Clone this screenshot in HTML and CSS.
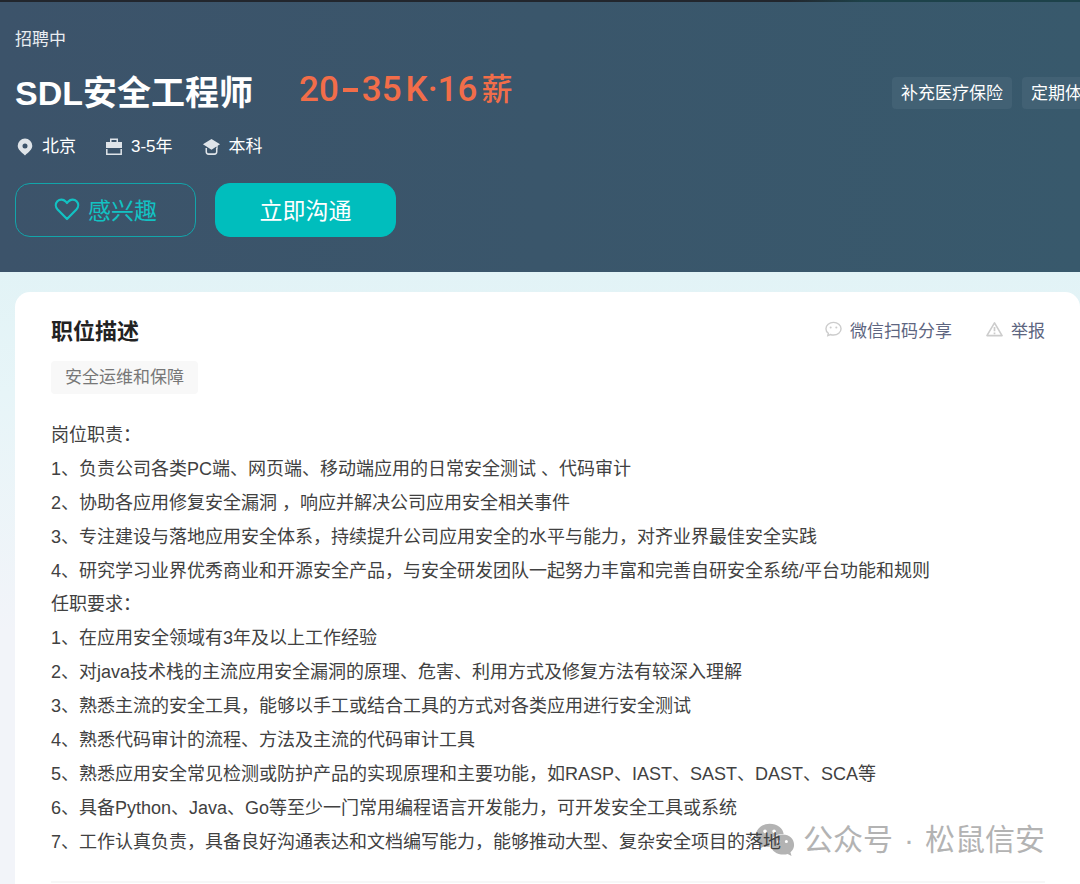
FILE: index.html
```html
<!DOCTYPE html>
<html lang="zh-CN">
<head>
  <meta charset="UTF-8" />
  <meta name="viewport" content="width=device-width, initial-scale=1.0"/>
  <title>SDL安全工程师</title>
  <link rel="stylesheet" href="styles.css">
</head>
<body>
  <header class="banner">
    <div class="job">
      <div class="status">招聘中</div>
      <div class="title-row">
        <h1>SDL安全工程师</h1>
        <div class="salary"><span>20</span><span class="dash"></span><span>35</span><span>K·16</span><span class="unit">薪</span></div>
      </div>
      <div class="meta">
        <span class="meta-item">
          <svg width="19" height="18" viewBox="0 0 19 18"><path fill="#dfe4e9" fill-rule="evenodd" d="M10 .5a7.300 7.300 0 0 1 7.300 7.300c0 3.600-3.300 6-7.300 9.700-4-3.700-7.300-6.100-7.300-9.700A7.300 7.300 0 0 1 10 .5zm0 5a2.500 2.500 0 1 0 0 5 2.500 2.500 0 0 0 0-5z"/></svg>
          北京
        </span>
        <span class="meta-item">
          <svg width="18" height="18" viewBox="0 0 18 18"><path fill="#dfe4e9" fill-rule="evenodd" d="M5 4V.5h8V4h4v6H1V4zm1.500 0h5V2h-5z"/><path fill="none" stroke="#dfe4e9" stroke-width="1.500" d="M1.800 11v5.200h14.400V11"/></svg>
          3-5年
        </span>
        <span class="meta-item">
          <svg width="19" height="18" viewBox="0 0 20 18"><path fill="#dfe4e9" d="M10 .5l9 5.500-2.500 1.800v2.700h-1.300V8.600L10 12 1 6z"/><path fill="none" stroke="#dfe4e9" stroke-width="1.600" d="M4.500 10v4q0 2.500 2.500 2.500h6q2.500 0 2.500-2.500v-4"/></svg>
          本科
        </span>
      </div>
      <div class="actions">
        <button type="button" class="btn btn-like">
          <svg width="26" height="24" viewBox="0 0 26 24"><path fill="none" stroke="#12c2c3" stroke-width="2.200" stroke-linejoin="round" d="M13 22L3.600 12.500C1.300 10 1.200 6.500 3.400 4.200c2.300-2.300 6-2.200 8.200.2L13 6l1.400-1.600c2.200-2.400 5.900-2.500 8.200-.2 2.200 2.300 2.100 5.800-.2 8.300z"/></svg>
          <span>感兴趣</span>
        </button>
        <button type="button" class="btn btn-chat"><span>立即沟通</span></button>
      </div>
    </div>
    <div class="perks">
      <span class="perk">补充医疗保险</span>
      <span class="perk">定期体检</span>
    </div>
  </header>

  <main class="content">
    <section class="card">
      <div class="card-head">
        <h2>职位描述</h2>
        <div class="links">
          <a href="#">
            <svg width="17" height="16" viewBox="0 0 18 16"><path fill="none" stroke="#ccc" stroke-width="1.500" d="M3 15l.5-2.500C1.800 11.300 1 9.600 1 7.700 1 4 4.600 1 9 1s8 3 8 6.700-3.600 6.700-8 6.700c-1.200 0-2.300-.2-3.300-.6z"/><circle cx="6" cy="6.500" r="1.100" fill="#ccc"/><circle cx="12" cy="6.500" r="1.100" fill="#ccc"/></svg>
            微信扫码分享
          </a>
          <a href="#">
            <svg width="17" height="16" viewBox="0 0 18 16"><path fill="none" stroke="#ccc" stroke-width="1.700" stroke-linejoin="round" d="M9 1.500L17 15H1z"/><path stroke="#ccc" stroke-width="1.800" d="M9 6v4.500M9 11.700v1.800"/></svg>
            举报
          </a>
        </div>
      </div>
      <span class="tag">安全运维和保障</span>

      <div class="desc">
        <h3>岗位职责：</h3>
        <p>1、负责公司各类PC端、网页端、移动端应用的日常安全测试 、代码审计</p>
        <p>2、协助各应用修复安全漏洞 ，响应并解决公司应用安全相关事件</p>
        <p>3、专注建设与落地应用安全体系，持续提升公司应用安全的水平与能力，对齐业界最佳安全实践</p>
        <p>4、研究学习业界优秀商业和开源安全产品，与安全研发团队一起努力丰富和完善自研安全系统/平台功能和规则</p>
        <h3>任职要求：</h3>
        <p>1、在应用安全领域有3年及以上工作经验</p>
        <p>2、对java技术栈的主流应用安全漏洞的原理、危害、利用方式及修复方法有较深入理解</p>
        <p>3、熟悉主流的安全工具，能够以手工或结合工具的方式对各类应用进行安全测试</p>
        <p>4、熟悉代码审计的流程、方法及主流的代码审计工具</p>
        <p>5、熟悉应用安全常见检测或防护产品的实现原理和主要功能，如RASP、IAST、SAST、DAST、SCA等</p>
        <p>6、具备Python、Java、Go等至少一门常用编程语言开发能力，可开发安全工具或系统</p>
        <p>7、工作认真负责，具备良好沟通表达和文档编写能力，能够推动大型、复杂安全项目的落地</p>
      </div>

      <div class="watermark">
        <svg width="40" height="36" viewBox="0 0 44 38">
          <path fill="#b3b3b3" fill-rule="evenodd" d="M16 1c8.500 0 15 5 15.500 11.500C23 12 16 17.500 16 24.500l.3 2c-2 .1-4-.1-6-.7L5 28.500l1.500-4.600C2.800 21.600 1 18 1 14 1 6.500 8 1 16 1zm-5 6.500a2 2 0 1 0 0 4 2 2 0 0 0 0-4zm10 0a2 2 0 1 0 0 4 2 2 0 0 0 0-4z"/>
          <path fill="#b3b3b3" fill-rule="evenodd" d="M30.500 13C38 13 43 18 43 24.500c0 3.200-1.500 6-4 8l1.200 4-4.200-2.200c-7.500 2.500-18.500-1.300-18.500-9.800C17.500 18 23 13 30.500 13zM26 19a1.700 1.700 0 1 0 0 3.400 1.700 1.700 0 0 0 0-3.400zm8.500 0a1.700 1.700 0 1 0 0 3.400 1.700 1.700 0 0 0 0-3.400z"/>
        </svg>
        <span>公众号</span><span class="dot">·</span><span>松鼠信安</span>
      </div>
    </section>
  </main>
</body>
</html>
```

FILE: styles.css
```css
* {
  box-sizing: border-box;
}
body {
  margin: 0;
  min-height: 100vh;
  font-family: "Liberation Sans", "Noto Sans CJK SC", sans-serif;
  font-size: 17px;
  color: #414141;
  background: #f2f4f9;
  overflow: hidden;
}
h1, h2, h3, p {
  margin: 0;
}
svg {
  flex: none;
}

/* top banner */
.banner {
  position: relative;
  display: flex;
  justify-content: space-between;
  padding: 28px 0 35px 15px;
  background: linear-gradient(90deg, #3c536a, #38596c);
  color: #fff;
}
.banner::before {
  content: "";
  position: absolute;
  top: 0;
  left: 0;
  right: 0;
  height: 2px;
  background: linear-gradient(90deg, #22262d 73%, #1d424a 80%);
}
.status {
  line-height: 24px;
  color: #e8ecf0;
}
.title-row {
  display: flex;
  align-items: center;
  gap: 46px;
  height: 50px;
  margin-top: 16px;
}
h1 {
  font-size: 34px;
  line-height: 50px;
}
.salary {
  display: flex;
  align-items: center;
  gap: 4px;
  padding-bottom: 6px;
  font-family: Roboto, "Noto Sans CJK SC", sans-serif;
  font-size: 35px;
  font-weight: 500;
  line-height: 44px;
  color: #f26d49;
}
.salary .dash {
  width: 15px;
  height: 4px;
  background: #f26d49;
}
.salary .unit {
  font-size: 31px;
}
.meta {
  display: flex;
  gap: 29px;
  margin-top: 17px;
}
.meta-item {
  display: flex;
  align-items: center;
  gap: 8px;
  line-height: 24px;
}
.actions {
  display: flex;
  gap: 19px;
  margin-top: 24px;
}
.btn {
  display: flex;
  align-items: center;
  justify-content: center;
  gap: 8px;
  width: 181px;
  height: 54px;
  padding: 0 0 3px;
  border: 1px solid #12a5aa;
  border-radius: 15px;
  font-family: inherit;
  font-size: 23px;
  cursor: pointer;
}
.btn-like {
  background: none;
  color: #12c2c3;
}
.btn-chat {
  background: #00bebd;
  border-color: #00bebd;
  color: #fff;
}
.perks {
  display: flex;
  gap: 10px;
  width: 188px;
  margin-top: 49px;
  overflow: hidden;
}
.perk {
  flex: none;
  height: 32px;
  padding: 0 9px;
  border-radius: 4px;
  background: #426174;
  line-height: 34px;
}

/* job description */
.content {
  padding: 20px 0 0 15px;
  background: linear-gradient(#e2f3f6, #e7f5f8 120px, #f2f4f9 360px);
}
.card {
  position: relative;
  z-index: 0;
  padding: 20px 35px 40px 36px;
  border-radius: 15px;
  background: #fff;
}
.card-head {
  display: flex;
  justify-content: space-between;
  align-items: center;
  height: 34px;
}
h2 {
  font-size: 22px;
  color: #222;
}
.links {
  display: flex;
  gap: 34px;
}
.links a {
  display: flex;
  align-items: center;
  gap: 8px;
  color: #5d6580;
  text-decoration: none;
}
.tag {
  display: inline-block;
  margin-top: 15px;
  padding: 0 14px;
  border-radius: 4px;
  background: #f8f8f8;
  color: #777;
  line-height: 33px;
}
.desc {
  margin-top: 25px;
  padding-bottom: 22px;
  border-bottom: 2px solid #f7f7f7;
  font-size: 18px;
}
.desc h3 {
  font-size: 18px;
  font-weight: 400;
  line-height: 33px;
}
.desc p {
  line-height: 34px;
  white-space: nowrap;
}

/* account mark behind the last line */
.watermark {
  position: absolute;
  z-index: -1;
  right: 35px;
  top: 526px;
  display: flex;
  align-items: center;
  font-size: 30px;
  line-height: 44px;
  color: #b3b3b3;
}
.watermark svg {
  margin-right: 8px;
}
.watermark .dot {
  width: 32px;
  text-align: center;
}
```
